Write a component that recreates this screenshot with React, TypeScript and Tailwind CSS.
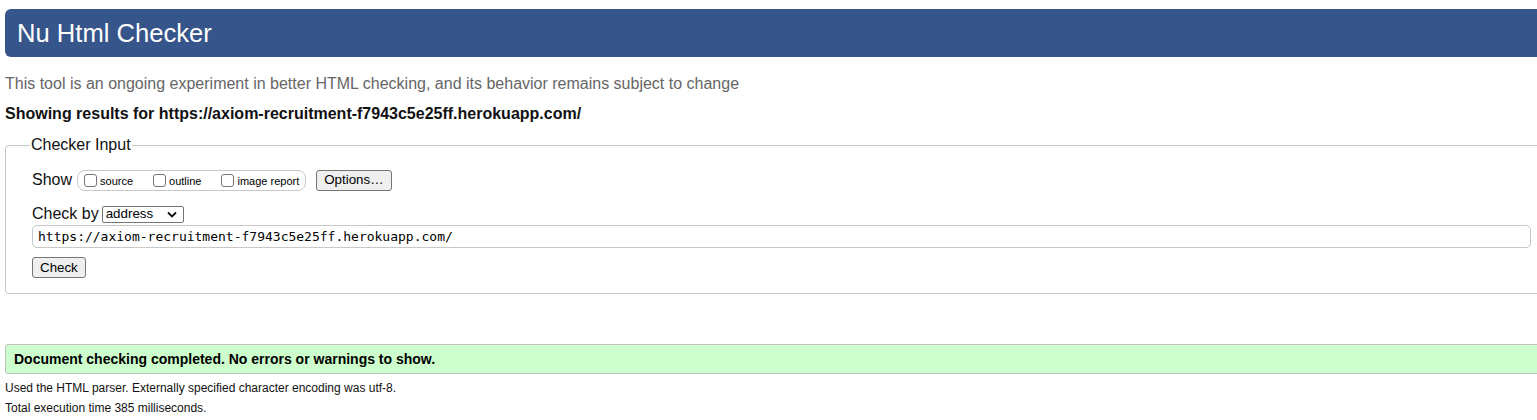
import React from "react";

const sans = "font-['Liberation_Sans',Arial,Helvetica,sans-serif]";

function Box({ label }: { label: string }) {
  return (
    <span className="flex items-end">
      <span className="w-[13px] h-[13px] border border-[#767676] rounded-[3px] bg-white" />
      <span className="ml-[3px] text-[11px] leading-[12px] text-black">{label}</span>
    </span>
  );
}

export default function App() {
  return (
    <div className={`w-full h-[420px] overflow-hidden bg-white ${sans}`}>
      <div className="w-[1563px] px-[5px] pt-[9px] text-black">
        <div className="h-[48px] rounded-[6px] bg-[#36558a] pl-[12px] text-white text-[25.6px] leading-[48px]">
          Nu Html Checker
        </div>
        <p className="mt-[18px] text-[16px] leading-[18px] text-[#666]">
          This tool is an ongoing experiment in better HTML checking, and its behavior remains subject to change
        </p>
        <p className="mt-[12px] text-[16px] leading-[18px] font-bold text-[#111]">
          Showing results for https://axiom-recruitment-f7943c5e25ff.herokuapp.com/
        </p>
        <fieldset className="mt-[13px] border border-[#c8c8c8] rounded-[4px] pl-[26px] pr-[26px] pb-[15px]">
          <legend className="ml-[-2px] px-[1px] text-[16px] leading-[18px] text-[#111]">Checker Input</legend>
          <div className="mt-[15px] flex items-center h-[22px]">
            <span className="text-[16px] leading-[18px] text-[#111]">Show</span>
            <span className="ml-[5px] h-[21px] flex items-center gap-[20px] border border-[#c8c8c8] rounded-[8px] pl-[6px] pr-[6px]">
              <Box label="source" />
              <Box label="outline" />
              <Box label="image report" />
            </span>
            <span className="ml-[10px] h-[21px] flex items-center border border-[#767676] bg-[#efefef] rounded-[3px] px-[7px] text-[13.333px] text-black">
              Options…
            </span>
          </div>
          <div className="mt-[14px] flex items-center h-[18px]">
            <span className="text-[16px] leading-[18px] text-[#111]">Check by</span>
            <span className="ml-[3px] w-[82px] h-[17px] flex items-center justify-between border border-[#767676] rounded-[2px] bg-white pl-[3px] pr-[6px] text-[13.333px] text-black">
              address
              <svg width="10" height="7" viewBox="0 0 10 7">
                <path d="M1 1.5 L5 5.5 L9 1.5" fill="none" stroke="#111" strokeWidth="1.8" />
              </svg>
            </span>
          </div>
          <div className="mt-[2px] h-[23px] flex items-center border border-[#c8c8c8] rounded-[5px] pl-[5px] font-['DejaVu_Sans_Mono',monospace] text-[13px] text-black">
            https://axiom-recruitment-f7943c5e25ff.herokuapp.com/
          </div>
          <div className="mt-[9px] flex">
            <span className="h-[21px] flex items-center border border-[#767676] bg-[#efefef] rounded-[3px] px-[7px] text-[13.333px] text-black">
              Check
            </span>
          </div>
        </fieldset>
        <div className="mt-[50px] h-[30px] flex items-center border border-[#c0c0c0] rounded-[3px] bg-[#ccffcc] pl-[8px] text-[14px] font-bold text-black">
          Document checking completed. No errors or warnings to show.
        </div>
        <p className="mt-[4px] text-[12px] leading-[20px] text-[#111]">
          Used the HTML parser. Externally specified character encoding was utf-8.
        </p>
        <p className="text-[12px] leading-[20px] text-[#111]">Total execution time 385 milliseconds.</p>
      </div>
    </div>
  );
}
